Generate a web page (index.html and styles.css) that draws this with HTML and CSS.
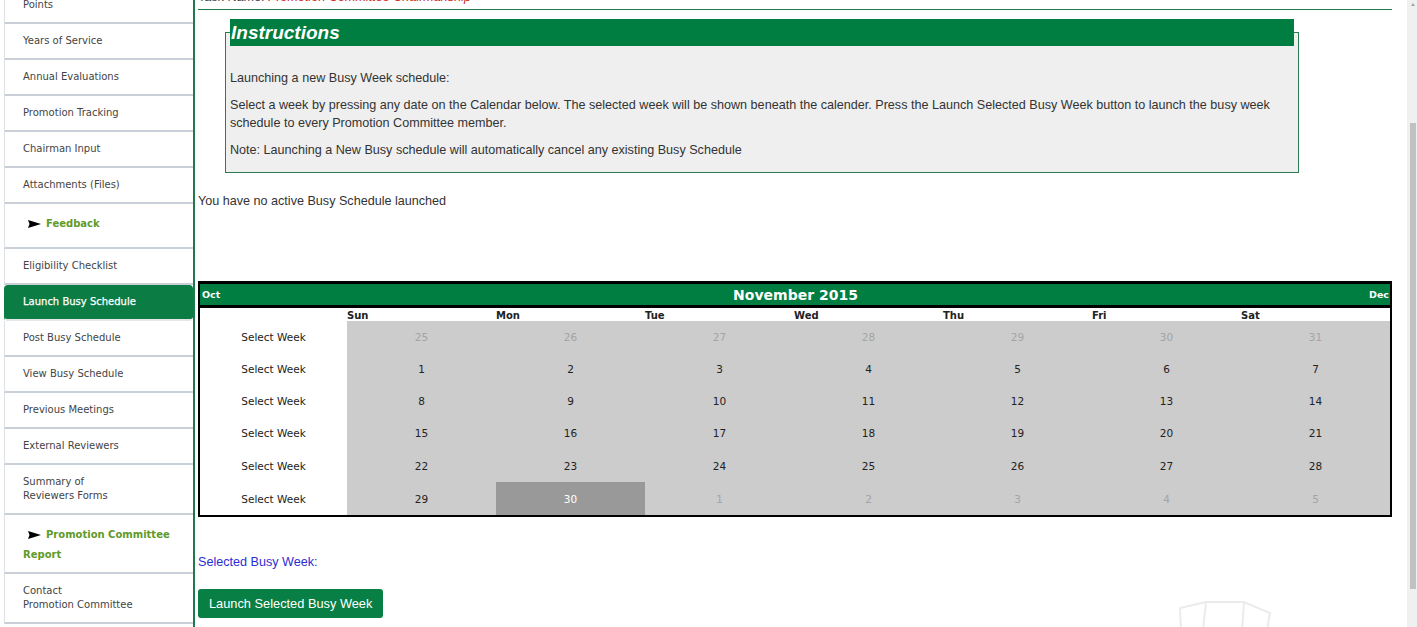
FILE: index.html
```html
<!DOCTYPE html>
<html lang="en">
<head>
<meta charset="utf-8">
<title>Launch Busy Schedule</title>
<link rel="stylesheet" href="styles.css">
</head>
<body>
<div class="page">
  <nav class="sidebar">
    <a class="nav-item" href="#">Points</a>
    <a class="nav-item" href="#">Years of Service</a>
    <a class="nav-item" href="#">Annual Evaluations</a>
    <a class="nav-item" href="#">Promotion Tracking</a>
    <a class="nav-item" href="#">Chairman Input</a>
    <a class="nav-item" href="#">Attachments (Files)</a>
    <div class="nav-head"><span class="arrow"><svg width="13" height="23" viewBox="0 0 13 23"><polygon points="0,6 13,10 0,14 1.5,10" fill="#000"/></svg></span>Feedback</div>
    <a class="nav-item" href="#">Eligibility Checklist</a>
    <a class="nav-item active" href="#">Launch Busy Schedule</a>
    <a class="nav-item" href="#">Post Busy Schedule</a>
    <a class="nav-item" href="#">View Busy Schedule</a>
    <a class="nav-item" href="#">Previous Meetings</a>
    <a class="nav-item" href="#">External Reviewers</a>
    <a class="nav-item" href="#">Summary of<br>Reviewers Forms</a>
    <div class="nav-head"><span class="arrow"><svg width="13" height="23" viewBox="0 0 13 23"><polygon points="0,6 13,10 0,14 1.5,10" fill="#000"/></svg></span>Promotion Committee Report</div>
    <a class="nav-item" href="#">Contact<br>Promotion Committee</a>
  </nav>

  <main class="main">
    <div class="taskbar">Task Name: <span class="task">Promotion Committee Chairmanship</span></div>

    <fieldset class="instructions">
      <legend>Instructions</legend>
      <p>Launching a new Busy Week schedule:</p>
      <p>Select a week by pressing any date on the Calendar below. The selected week will be shown beneath the calender. Press the Launch Selected Busy Week button to launch the busy week schedule to every Promotion Committee member.</p>
      <p>Note: Launching a New Busy schedule will automatically cancel any existing Busy Schedule</p>
    </fieldset>

    <p class="status">You have no active Busy Schedule launched</p>

    <div class="cal">
      <div class="cal-head">
        <span class="prev">Oct</span>
        <span class="title">November 2015</span>
        <span class="next">Dec</span>
      </div>
      <div class="cal-grid">
        <div class="blank"></div>
        <div class="dn">Sun</div><div class="dn">Mon</div><div class="dn">Tue</div><div class="dn">Wed</div><div class="dn">Thu</div><div class="dn">Fri</div><div class="dn">Sat</div>

        <div class="sel">Select Week</div>
        <div class="day other">25</div><div class="day other">26</div><div class="day other">27</div><div class="day other">28</div><div class="day other">29</div><div class="day other">30</div><div class="day other">31</div>

        <div class="sel">Select Week</div>
        <div class="day">1</div><div class="day">2</div><div class="day">3</div><div class="day">4</div><div class="day">5</div><div class="day">6</div><div class="day">7</div>

        <div class="sel">Select Week</div>
        <div class="day">8</div><div class="day">9</div><div class="day">10</div><div class="day">11</div><div class="day">12</div><div class="day">13</div><div class="day">14</div>

        <div class="sel">Select Week</div>
        <div class="day">15</div><div class="day">16</div><div class="day">17</div><div class="day">18</div><div class="day">19</div><div class="day">20</div><div class="day">21</div>

        <div class="sel">Select Week</div>
        <div class="day">22</div><div class="day">23</div><div class="day">24</div><div class="day">25</div><div class="day">26</div><div class="day">27</div><div class="day">28</div>

        <div class="sel">Select Week</div>
        <div class="day">29</div><div class="day today">30</div><div class="day other">1</div><div class="day other">2</div><div class="day other">3</div><div class="day other">4</div><div class="day other">5</div>
      </div>
    </div>

    <p class="selected">Selected Busy Week:</p>
    <button class="launch" type="button">Launch Selected Busy Week</button>
  </main>
</div>

<svg class="watermark" width="96" height="32" viewBox="0 0 96 32">
  <path d="M3 32 L2 10 L28 4 L66 4 L92 15 L89 32 M28 4 L25 32 M66 4 L64 32" fill="none" stroke="#ebebeb" stroke-width="2"/>
</svg>

<div class="scrollbar"><div class="thumb"></div></div>
</body>
</html>
```

FILE: styles.css
```css
* { box-sizing: border-box; }

html, body {
  margin: 0;
  padding: 0;
  height: 100%;
  overflow: hidden;
  background: #fff;
}

body {
  font-family: "Liberation Sans", Arial, sans-serif;
  font-size: 12.6px;
  color: #333;
  position: relative;
}

.page {
  display: flex;
  align-items: stretch;
  margin-top: -12px;
  min-height: calc(100vh + 40px);
}

/* ---------- sidebar ---------- */
.sidebar {
  width: 195px;
  flex: none;
  padding-left: 4px;
  border-right: 2px solid #1c7a4b;
  display: flex;
  flex-direction: column;
  font-family: "DejaVu Sans", Verdana, sans-serif;
  font-size: 10px;
  line-height: 14px;
}

.nav-item {
  display: block;
  padding: 10px 0 10px 18px;
  color: #444;
  text-decoration: none;
  border-left: 1px solid #dde2e6;
  border-bottom: 2px solid #c9d0d7;
}

.nav-item.active {
  background: #0a7c44;
  color: #fff;
  border-radius: 4px;
  border-left-color: transparent;
  border-bottom-color: #e3e7ea;
  -webkit-text-stroke: 0.25px #fff;
}

.nav-head {
  padding: 10px 0 10px 18px;
  font-weight: bold;
  color: #5f9a29;
  border-left: 1px solid #dde2e6;
  border-bottom: 2px solid #c9d0d7;
}

.arrow {
  display: inline-block;
  width: 13px;
  height: 23px;
  margin: 0 5px;
  vertical-align: -10px;
}

.arrow svg { display: block; }

/* ---------- main ---------- */
.main {
  flex: 1;
  min-width: 0;
  padding: 0 25px 0 3px;
}

.taskbar {
  line-height: 18px;
  padding-bottom: 3px;
  border-bottom: 1px solid #1c7a4b;
  color: #444;
}

.task {
  color: #cc2a22;
  font-style: italic;
}

.instructions {
  margin: 9px 0 0 27px;
  width: 1074px;
  min-width: 0;
  border: 1px solid #2a7d50;
  background: #efefef;
  padding: 14px 4px 4px;
}

.instructions legend {
  width: 100%;
  padding: 0 1px;
  background: #007d40;
  color: #fff;
  font-weight: bold;
  font-style: italic;
  font-size: 19px;
  line-height: 27px;
}

.instructions p {
  margin: 9px 0;
  line-height: 18px;
}

.status {
  margin: 19px 0 0;
  line-height: 18px;
}

/* ---------- calendar ---------- */
.cal {
  margin-top: 71px;
  border: 2px solid #000;
  border-top-width: 3px;
  font-family: "DejaVu Sans", Verdana, sans-serif;
}

.cal-head {
  display: grid;
  grid-template-columns: 1fr auto 1fr;
  align-items: center;
  height: 24px;
  padding: 0 1px 0 2px;
  background: #007d40;
  border-bottom: 3px solid #000;
  box-shadow: -1px 0 0 #000, 1px 0 0 #000;
  color: #fff;
  font-weight: bold;
}

.cal-head .prev,
.cal-head .next { font-size: 9.5px; }
.cal-head .next { text-align: right; }
.cal-head .title { font-size: 14px; }

.cal-grid {
  display: grid;
  grid-template-columns: 147px repeat(7, 149px);
  grid-template-rows: 13px 32px 32px 32px 32px 33px 33px;
  font-size: 10.5px;
  color: #222;
}

.dn {
  font-weight: bold;
  font-size: 10px;
  line-height: 15px;
  text-align: left;
}

.sel,
.day {
  display: flex;
  align-items: center;
  justify-content: center;
}

.day { background: #cccccc; }
.day.other { color: #a4a4a4; }
.day.today { background: #999999; color: #fff; }

/* ---------- bottom ---------- */
.selected {
  margin: 36px 0 0;
  line-height: 18px;
  color: #2d2dd2;
}

.launch {
  display: block;
  margin-top: 18px;
  height: 29px;
  padding: 0 11px;
  border: 0;
  border-radius: 3px;
  background: #087f45;
  color: #fff;
  font-family: "Liberation Sans", Arial, sans-serif;
  font-size: 12.8px;
}

.watermark {
  position: absolute;
  left: 1178px;
  top: 598px;
}

.scrollbar {
  position: fixed;
  top: 0;
  right: 0;
  width: 10px;
  height: 100%;
  background: #f0f0f0;
}

.scrollbar::before {
  content: "";
  position: absolute;
  top: 3px;
  left: 4px;
  border-left: 2px solid transparent;
  border-right: 2px solid transparent;
  border-bottom: 3px solid #a3a3a3;
}

.thumb {
  position: absolute;
  left: 3px;
  right: 1px;
  top: 123px;
  height: 466px;
  background: #c1c1c1;
}
```
